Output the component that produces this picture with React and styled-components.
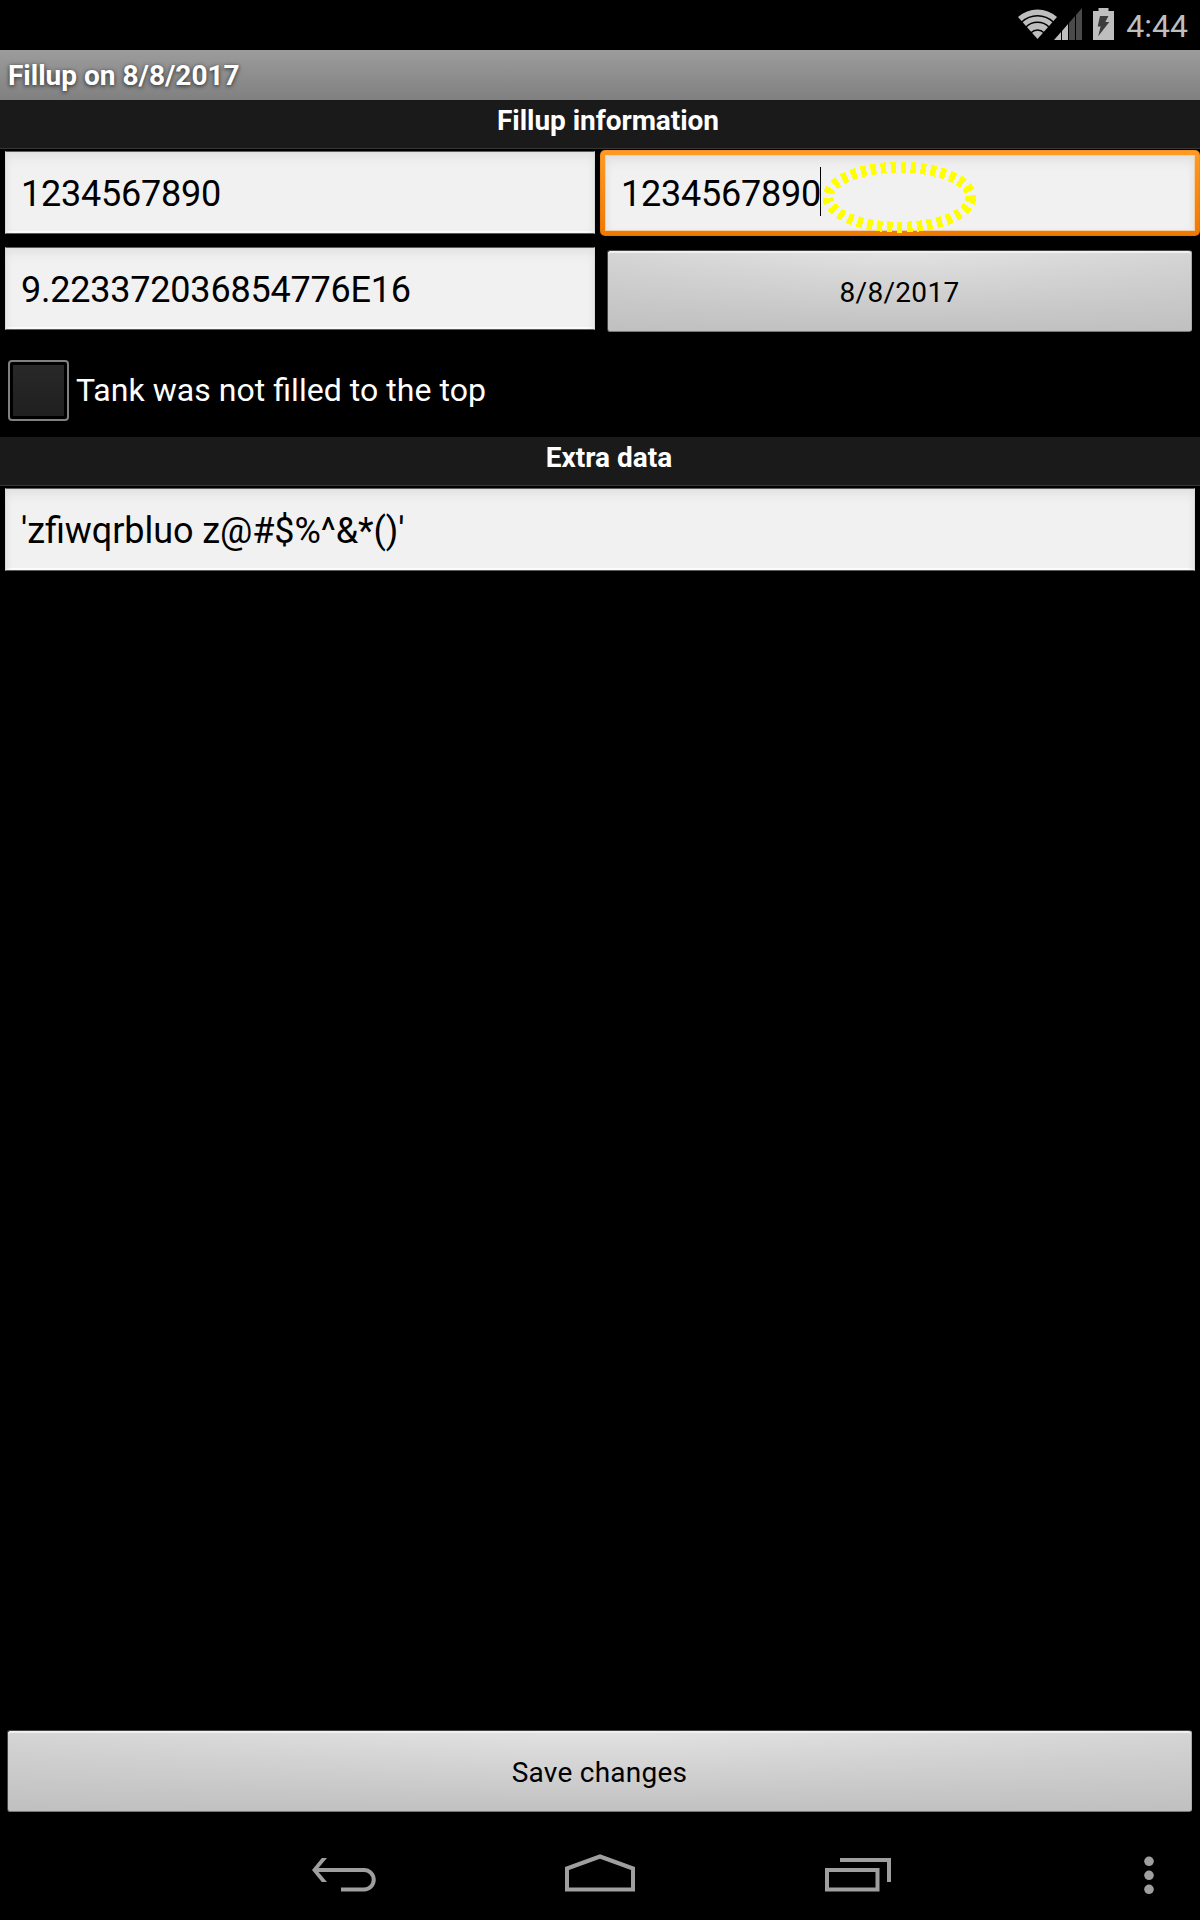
import React from 'react';
import styled, { createGlobalStyle } from 'styled-components';

const Global = createGlobalStyle`
  * { box-sizing: border-box; }
  body { margin: 0; background: #000; }
`;

const Screen = styled.div`
  width: 1200px;
  height: 1920px;
  display: flex;
  flex-direction: column;
  background: #000;
  color: #fff;
  font-family: Roboto, "Liberation Sans", sans-serif;
  font-feature-settings: "liga" 1;
  overflow: hidden;
`;

const StatusBar = styled.header`
  height: 50px;
  display: flex;
  justify-content: flex-end;
  padding-right: 12px;
`;

const Clock = styled.span`
  margin-left: 12px;
  font-size: 32px;
  line-height: 52px;
  color: #bebebe;
`;

const TitleBar = styled.h1`
  margin: 0;
  height: 50px;
  padding-left: 8px;
  font-size: 28px;
  font-weight: 700;
  line-height: 52px;
  background: linear-gradient(#9c9c9c, #808080);
  text-shadow: 0 1px 4px rgba(0, 0, 0, 0.75);
`;

const Section = styled.h2`
  margin: 0;
  height: 49px;
  padding-left: ${(p) => p.$shift}px;
  border-bottom: 1px solid #373737;
  background: #1a1a1a;
  font-size: 28px;
  font-weight: 700;
  line-height: 41px;
  letter-spacing: ${(p) => p.$track || 0}px;
  text-align: center;
`;

const Columns = styled.div`
  display: grid;
  grid-template-columns: 600px 600px;
  align-items: start;
  height: ${(p) => p.$height}px;
`;

const Field = styled.div`
  height: 83px;
  margin: ${(p) => p.$top}px 5px 0;
  padding-left: 15px;
  border: 1px solid;
  border-color: #5c5c5c #d8d8d8 #5c5c5c #d8d8d8;
  background: #f1f1f1;
  box-shadow: inset 0 12px 12px -8px #dedede, inset 5px 0 7px -4px #e2e2e2,
    inset -5px 0 7px -4px #e2e2e2, inset 0 -2px 0 #fff;
  color: #000;
  font-size: 36px;
  line-height: 84px;
  letter-spacing: ${(p) => p.$track}px;
  white-space: nowrap;
`;

const FocusRing = styled.div`
  position: relative;
  height: 86px;
  margin-top: 1px;
  padding: 5px;
  border-radius: 5px;
  background: linear-gradient(#ff9b26, #f07800);
  box-shadow: inset 0 0 1px #7a3c00;
`;

const FocusedInput = styled.div`
  display: flex;
  align-items: center;
  height: 76px;
  padding: 2px 0 0 15px;
  border: 1px solid #f3cfa5;
  background: #f1f1f1;
  box-shadow: inset 0 12px 12px -8px #dedede, inset 5px 0 7px -4px #e2e2e2,
    inset -5px 0 7px -4px #e2e2e2;
  color: #000;
  font-size: 36px;
  line-height: 72px;
  letter-spacing: -0.22px;
`;

const Caret = styled.i`
  width: 1px;
  height: 49px;
  margin: -5px 0 0 -1px;
  background: #000;
`;

const Marker = styled.svg`
  position: absolute;
  left: 220px;
  top: 7px;
`;

const Button = styled.button`
  display: block;
  width: ${(p) => p.$width}px;
  height: 82px;
  margin: ${(p) => p.$top}px 0 0 7px;
  padding: 3px 0 0;
  border: 1px solid;
  border-color: #444 #a8a8a8 #777 #444;
  border-radius: 3px;
  background: linear-gradient(90deg, rgba(190, 190, 190, 0.35), rgba(190, 190, 190, 0) 45%,
      rgba(190, 190, 190, 0) 55%, rgba(190, 190, 190, 0.35)),
    linear-gradient(#e2e2e2, #c1c1c1);
  box-shadow: inset 0 2px 0 #f0f0f0;
  color: #000;
  font: 400 28px/77px Roboto, "Liberation Sans", sans-serif;
  letter-spacing: ${(p) => p.$track}px;
`;

const CheckRow = styled.label`
  display: flex;
  height: 104px;
  padding: 27px 0 0 8px;
  font-size: 32px;
  line-height: 60px;
  letter-spacing: 0.04px;
`;

const CheckBox = styled.span`
  width: 61px;
  height: 61px;
  margin-right: 7px;
  padding: 3px;
  border: 2px solid #808080;
  border-radius: 4px;

  &::before {
    content: "";
    display: block;
    height: 51px;
    background: linear-gradient(#282828, #202020);
  }
`;

const Spacer = styled.div`
  flex: 1;
`;

const NavBar = styled.nav`
  height: 108px;
  display: flex;
  align-items: flex-start;
  padding-top: 40px;
`;

const NavKey = styled.span`
  display: flex;
  margin-left: ${(p) => p.$gap}px;
`;

const BatterySlot = styled.span`
  margin-left: 11px;
`;

const Wifi = () => (
  <svg width="34" height="50" viewBox="0 0 34 50" overflow="visible">
    <path d="M17.5 39 L-2 17 A29.4 29.4 0 0 1 37 17Z" fill="#bebebe" />
    <g fill="none" stroke="#000" strokeWidth="1.5">
      <path d="M1.6 22.2A23 23 0 0 1 33.4 22.2" />
      <path d="M6 27A16.5 16.5 0 0 1 29 27" />
      <path d="M11 32.7A9 9 0 0 1 24 32.7" />
    </g>
  </svg>
);

const Signal = () => (
  <svg width="28" height="50" viewBox="0 0 28 50">
    <path d="M0 40L7 32V40ZM8 31L14 24V40H8Z" fill="#bebebe" />
    <path d="M15 23L21 16V40H15ZM22 15L28 8V40H22Z" fill="#4a4a4a" />
  </svg>
);

const Battery = () => (
  <svg width="21" height="50" viewBox="0 0 21 50">
    <path d="M5.5 8H15.5V11H21V40H0V11H5.5Z" fill="#bebebe" />
    <path d="M7 16H15.5L12.3 22H16.3L5.2 36.3L7.6 26.5H4.7Z" fill="#3c3c3c" />
  </svg>
);

const BackIcon = () => (
  <svg width="66" height="40" viewBox="0 0 66 40" fill="none" stroke="#9f9f9f" strokeWidth="4">
    <path d="M5 18H54A9.75 9.75 0 0 1 54 37.5H31" />
    <path d="M11.8 6H17L6.8 18L17 30H11.8L2 18Z" fill="#9f9f9f" stroke="none" />
  </svg>
);

const HomeIcon = () => (
  <svg width="70" height="40" viewBox="0 0 70 40" fill="none" stroke="#9f9f9f" strokeWidth="4">
    <path d="M2 16.5L35 4.5L68 16.5V37.6H2Z" />
  </svg>
);

const RecentIcon = () => (
  <svg width="66" height="40" viewBox="0 0 66 40" fill="none" stroke="#9f9f9f" strokeWidth="4">
    <path d="M2 18H52.5V37.6H2Z M15 8H64V30" />
  </svg>
);

const MoreIcon = () => (
  <svg width="10" height="44" viewBox="0 0 10 44" fill="#9f9f9f">
    <circle cx="5" cy="9.3" r="4.8" />
    <circle cx="5" cy="23.3" r="4.8" />
    <circle cx="5" cy="37.3" r="4.8" />
  </svg>
);

export default function App() {
  return (
    <Screen>
      <Global />
      <StatusBar>
        <Wifi />
        <Signal />
        <BatterySlot><Battery /></BatterySlot>
        <Clock>4:44</Clock>
      </StatusBar>
      <TitleBar>Fillup on 8/8/2017</TitleBar>
      <Section $shift={16} $track={-0.04}>Fillup information</Section>
      <Columns $height={98}>
        <Field $top={2} $track={-0.22}>1234567890</Field>
        <FocusRing>
          <FocusedInput>
            1234567890
            <Caret />
          </FocusedInput>
          <Marker width="160" height="80" viewBox="0 0 160 80">
            <ellipse cx="79.5" cy="40.2" rx="71.5" ry="30" fill="none" stroke="#ff0"
              strokeWidth="10.8" strokeDasharray="5.5 4.5" shapeRendering="crispEdges" />
          </Marker>
        </FocusRing>
      </Columns>
      <Columns $height={86}>
        <Field $top={0} $track={-0.22}>9.223372036854776E16</Field>
        <Button $width={585} $top={3} $track={0.3}>8/8/2017</Button>
      </Columns>
      <CheckRow>
        <CheckBox />
        Tank was not filled to the top
      </CheckRow>
      <Section $shift={18}>Extra data</Section>
      <Field $top={2} $track={-0.08}>'zfiwqrbluo z@#$%^&amp;*()'</Field>
      <Spacer />
      <Button $width={1185} $top={0} $track={0.25}>Save changes</Button>
      <NavBar>
        <NavKey $gap={310}><BackIcon /></NavKey>
        <NavKey $gap={189}><HomeIcon /></NavKey>
        <NavKey $gap={190}><RecentIcon /></NavKey>
        <NavKey $gap={253}><MoreIcon /></NavKey>
      </NavBar>
    </Screen>
  );
}
